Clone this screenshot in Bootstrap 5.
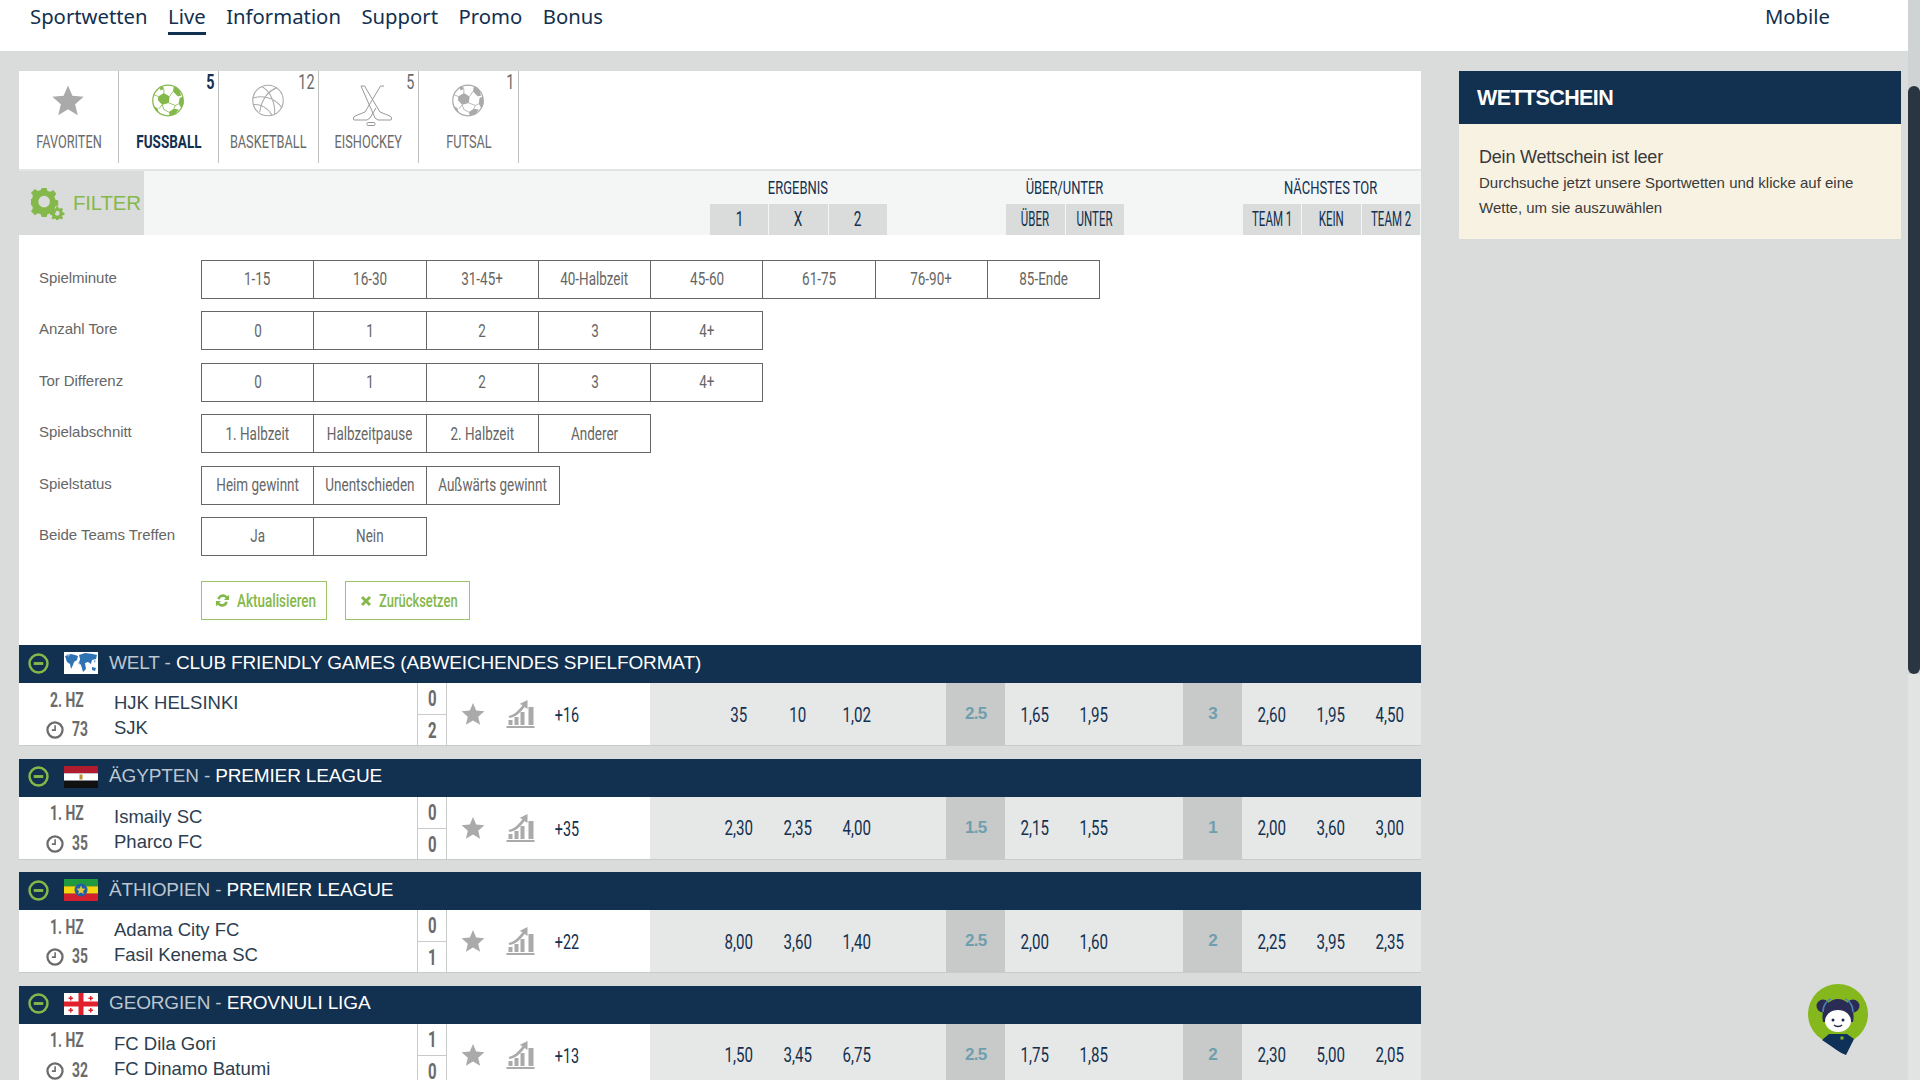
<!DOCTYPE html>
<html lang="de">
<head>
  <meta charset="UTF-8">
  <title>Live Sportwetten</title>
  <link href="https://cdn.jsdelivr.net/npm/bootstrap@5.3.0/dist/css/bootstrap.min.css" rel="stylesheet">
  <style>
    html, body { height: 100%; overflow: hidden; }
    body { background: #d9dcdb; font-family: "Liberation Sans", Arial, sans-serif; color: #12304f; }
    .shell { height: 1080px; overflow: hidden; position: relative; }
    .page-col { width: 1908px; }
    .fake-scroll { width: 12px; background: linear-gradient(#cfd3d3 0, #cfd3d3 674px, #e2e4e4 674px); position: relative; }
    .fake-scroll span { position: absolute; left: 0; right: 0; top: 86px; height: 588px; background: #2a3542; border-radius: 6px; }

    /* no condensed font installed, so squeeze Roboto */
    .cn { display: inline-block; flex-shrink: 0; white-space: nowrap; font-family: Roboto, sans-serif; transform: scaleX(.75); }
    .cn-l { transform-origin: left center; }
    .cn-r { transform-origin: right center; }

    .topbar { height: 51px; background: #fff; padding-left: 30px; }
    .topnav-list { gap: 20.500px; }
    .topbar a { font-family: "Noto Sans", sans-serif; font-size: 20.300px; line-height: 24px; color: #12304f; text-decoration: none; display: block; padding: 4px 0 4px; }
    .topbar a.is-on { border-bottom: 3px solid #12304f; }
    .topbar .mobile-link { margin-right: 78px; }

    .main-col { width: 1402px; margin-left: 19px; }
    .side-col { width: 442px; margin-left: 38px; }
    .content-wrap { padding-top: 20px; }

    .sport-tabs { background: #fff; height: 100px; border-bottom: 2px solid #e3e4e4; padding-bottom: 6px; }
    .sport-tab { width: 100px; height: 92px; border-right: 1px solid #bfc0c0; position: relative; color: #6b6b6b; }
    .sport-tab > svg { display: block; margin: 13px 0 0 28.500px; height: 33px; width: 40px; }
    .sport-tab > svg.hockey { height: 41px; width: 41px; margin: 14px 0 0 33px; }
    .tab-name { position: absolute; left: 0; right: 0; top: 60px; height: 22px; font-size: 19px; }
    .tab-name .cn { transform: scaleX(.67); }
    .tab-count { position: absolute; right: 4px; top: 0; font-size: 20px; line-height: 22px; }
    .tab-count .cn { transform: scaleX(.72); }
    .sport-tab.is-on { color: #12304f; }
    .sport-tab.is-on .cn { font-weight: 700; }
    .sport-tab.is-on .tab-name .cn { transform: scaleX(.71); }

    .filter-head { background: #f4f5f5; height: 64px; }
    .filter-tag { width: 125px; background: #d9dcdb; color: #85b84a; font-size: 20.500px; letter-spacing: -.2px; gap: 7px; padding-left: 12px; flex-shrink: 0; }
    .odds-grid { display: grid; grid-template-columns: repeat(13, 59.23px); }
    .market-head { margin-left: 506px; grid-template-rows: 33px 31px; }
    .market-title { font-size: 18.500px; padding-top: 3px; }
    .market-title .cn { transform: scaleX(.7); }
    .market-cell { background: #d9dcdb; font-size: 19.500px; margin-left: 1px; padding-top: 1px; }
    .market-cell .cn { transform: scaleX(.7); }
    .market-cell .cn.tight { transform: scaleX(.59); }
    .mk-a { grid-column: 2 / span 3; }
    .mk-b { grid-column: 7 / span 2; }
    .mk-c { grid-column: 11 / span 3; }
    .col-2nd { grid-column-start: 2; }
    .col-6th { grid-column-start: 6; }
    .col-7th { grid-column-start: 7; }
    .col-10th { grid-column-start: 10; }
    .col-11th { grid-column-start: 11; }

    .filter-body { background: #fff; height: 410px; padding: 25px 0 0 20px; }
    .filter-row { height: 51.400px; }
    .filter-label { width: 162px; font-size: 15px; color: #666; letter-spacing: -.05px; line-height: 36px; }
    .filter-btn { width: 113.300px; height: 39px; border: 1px solid #666; margin-right: -1px; font-size: 17.500px; color: #666; background: #fff; }
    .filter-btn .cn, .action-btn .cn { transform: scaleX(.77); }
    .filter-btn.wide { width: 134.500px; }
    .filter-actions { padding: 13px 0 0 162px; gap: 18px; }
    .action-btn { height: 39px; border: 1px solid #9dc368; color: #85b84a; font-size: 17.500px; font-weight: 500; padding: 0 0 0 13px; background: #fff; border-radius: 0; overflow: visible; }
    .action-a { width: 126px; gap: 7px; }
    .action-b { width: 125px; gap: 7px; padding-left: 14px; }
    .action-b .cn { transform: scaleX(.74); }

    .league-head { height: 38px; background: #12304f; color: #fff; font-size: 19px; letter-spacing: -.15px; padding-bottom: 2px; }
    .league-head .toggle { margin: 0 15px 0 9px; }
    .league-head .flag { width: 34px; height: 22px; margin-right: 11px; display: block; }
    .league-head .land { color: #bcc6d0; white-space: pre; }

    .match-row { height: 63px; margin-bottom: 12.500px; background: #fff; border-bottom: 1px solid #c9caca; }
    .match-time { width: 78px; padding: 3px 0 0 27px; color: #6b6b6b; font-size: 21px; font-weight: 700; flex-shrink: 0; }
    .match-time .cn { transform: scaleX(.66); }
    .time-top { height: 29px; padding-left: 4px; }
    .time-bot { height: 30px; gap: 4px; font-size: 21px; }
    .match-teams { width: 320px; padding-left: 17px; font-size: 18.500px; line-height: 25px; color: #2c3e50; padding-top: 7px; flex-shrink: 0; }
    .match-score { width: 30px; border-left: 1px solid #c9caca; border-right: 1px solid #c9caca; color: #6b6b6b; font-size: 22px; font-weight: 700; flex-shrink: 0; }
    .match-score > div { height: 31px; }
    .match-score > div:first-child { border-bottom: 1px solid #c9caca; height: 32px; }
    .match-score .cn { transform: scaleX(.68); }
    .match-extra { width: 203px; padding-left: 14px; flex-shrink: 0; }
    .more-count { width: 40px; margin-left: 11px; font-size: 20px; color: #12304f; padding-top: 2px; }
    .more-count .cn { transform: scaleX(.72); }
    .chart-ico { margin-left: 20px; }
    .odds { background: #e6e7e7; font-size: 21px; color: #12304f; height: 62px; }
    .odd { padding-top: 3px; }
    .odd .cn { transform: scaleX(.72); }
    .odd-line { background: #c8c9c9; color: #6f9fae; font-weight: 700; font-size: 17px; letter-spacing: -.8px; }

    .slip-head { height: 53px; background: #12304f; color: #fff; font-size: 21.500px; font-weight: 700; letter-spacing: -.6px; padding: 1px 0 0 18px; }
    .slip-body { height: 115px; background: #f8f2e3; padding: 21px 18px 0 20px; color: #3a3a3a; }
    .slip-title { font-size: 18px; line-height: 24px; letter-spacing: -.2px; }
    .slip-text { font-size: 15px; line-height: 25px; margin-top: 1px; }

    .chat-bot { position: absolute; left: 1808px; top: 984px; width: 60px; height: 72px; }
  </style>
</head>
<body>

<svg width="0" height="0" class="position-absolute">
  <symbol id="i-star" viewBox="0 0 24 24"><path d="M12 1l3.200 7.600 8.200.7-6.200 5.400 1.900 8L12 18.400 4.900 22.700l1.900-8L.6 9.300l8.200-.7z"/></symbol>
  <symbol id="i-chart" viewBox="0 0 30 30"><path d="M1 27h28v2H1zM3 21h4v5H3zM9 18h4v8H9zM15 13h4v13h-4zM23 8h5v18h-5z"/><path d="M3 17c5-1 10-5 14-11l-3-1 8-4 0 9-3-2c-4 6-9 10-15 11z"/></symbol>
  <symbol id="i-clock" viewBox="0 0 16 16"><circle cx="8" cy="8" r="6.700" fill="none" stroke="currentColor" stroke-width="2"/><path d="M8.800 3.800v5H5.200V7.400h2.200V3.800z" fill="currentColor"/></symbol>
  <symbol id="i-minus" viewBox="0 0 22 22"><circle cx="11" cy="11" r="9.400" fill="none" stroke="#85b84a" stroke-width="2.600"/><rect x="6" y="9.500" width="10" height="3" fill="#85b84a"/></symbol>
  <symbol id="i-ball" viewBox="0 0 40 40">
    <circle cx="20" cy="20" r="18.500" fill="none" stroke="currentColor" stroke-width="1.500"/>
    <path d="M8 15l7-4 7 4-1 8-8 2-5-5zM27 3l6 3 3 8-4 1-6-6zM38 15l1 9-3 5-3-5 1-7zM21 34l6-4 6 1-5 6-6 1zM3 27l4 2 2 6-4-3zM10 4l4-1 1 3-4 2z" fill="currentColor"/>
    <path d="M22 15l4-6M21 23l8 3 4-2M15 11V6M13 25l2 6 6 3M8 15l-5-2M9 30l4-5M29 26l-2 4" stroke="currentColor" fill="none"/>
  </symbol>
</svg>

<div class="shell d-flex">
  <div class="page-col flex-shrink-0">

    <nav class="topbar d-flex justify-content-between">
      <div class="d-flex align-items-start topnav-list">
        <a href="#">Sportwetten</a>
        <a href="#" class="is-on">Live</a>
        <a href="#">Information</a>
        <a href="#">Support</a>
        <a href="#">Promo</a>
        <a href="#">Bonus</a>
      </div>
      <div><a href="#" class="mobile-link">Mobile</a></div>
    </nav>

    <div class="d-flex content-wrap">
      <div class="main-col flex-shrink-0">

        <div class="sport-tabs d-flex">
          <div class="sport-tab">
            <svg fill="#aaa"><use href="#i-star"/></svg>
            <div class="tab-name d-flex justify-content-center align-items-center"><span class="cn">FAVORITEN</span></div>
          </div>
          <div class="sport-tab is-on">
            <svg style="color:#85b84a"><use href="#i-ball"/></svg>
            <div class="tab-name d-flex justify-content-center align-items-center"><span class="cn">FUSSBALL</span></div>
            <div class="tab-count"><span class="cn cn-r">5</span></div>
          </div>
          <div class="sport-tab">
            <svg viewBox="0 0 40 40" fill="none" stroke="#aaa" stroke-width="1.300">
              <circle cx="20" cy="20" r="18.500"/>
              <path d="M12 3c9 4 17 17 16 34M2 17c12-4 27 0 35 12M2 25c9-1 18 4 23 13M30 5c-9 3-18 13-20 29"/>
            </svg>
            <div class="tab-name d-flex justify-content-center align-items-center"><span class="cn">BASKETBALL</span></div>
            <div class="tab-count"><span class="cn cn-r">12</span></div>
          </div>
          <div class="sport-tab">
            <svg class="hockey" viewBox="0 0 41 41" fill="none" stroke="#999" stroke-width="1">
              <path d="M9 1h3.500L28 27l10 4c2 1 2 3 1 4H26l-3-2z"/>
              <path d="M32 1h-3.500L13 27 3 31c-2 1-2 3-1 4h13l3-2 6-10"/>
              <rect x="15" y="37.500" width="8" height="3" rx="1"/>
            </svg>
            <div class="tab-name d-flex justify-content-center align-items-center"><span class="cn">EISHOCKEY</span></div>
            <div class="tab-count"><span class="cn cn-r">5</span></div>
          </div>
          <div class="sport-tab">
            <svg style="color:#aaa"><use href="#i-ball"/></svg>
            <div class="tab-name d-flex justify-content-center align-items-center"><span class="cn">FUTSAL</span></div>
            <div class="tab-count"><span class="cn cn-r">1</span></div>
          </div>
        </div>

        <div class="filter-head d-flex">
          <div class="filter-tag d-flex align-items-center">
            <svg width="35" height="33" viewBox="0 0 36 34" fill="#85b84a">
              <path d="M11 1h5l1 3 3 1 3-2 3 4-2 3 1 3 3 1v5l-3 1-1 3 2 3-4 3-2-2-3 1-1 3h-5l-1-3-3-1-3 2-4-4 2-3-1-3-3-1v-5l3-1 1-3-2-3 4-4 3 2 3-1zM13.500 9a6 6 0 100 12 6 6 0 000-12z"/>
              <path d="M26 20h2l.5 2 1.500.5 1.500-1 1.500 1.500-1 1.500.5 1.500 2 .5v2l-2 .5-.5 1.500 1 1.500-1.500 1.500-1.500-1-1.500.5-.5 2h-2l-.5-2-1.500-.5-1.500 1-1.500-1.500 1-1.500-.5-1.500-2-.5v-2l2-.5.5-1.500-1-1.500 1.500-1.500 1.500 1 1.500-.5zM27 24.500a2.500 2.500 0 100 5 2.500 2.500 0 000-5z"/>
            </svg>
            FILTER
          </div>
          <div class="odds-grid market-head">
            <div class="market-title mk-a d-flex justify-content-center align-items-center"><span class="cn">ERGEBNIS</span></div>
            <div class="market-title mk-b d-flex justify-content-center align-items-center"><span class="cn">ÜBER/UNTER</span></div>
            <div class="market-title mk-c d-flex justify-content-center align-items-center"><span class="cn">NÄCHSTES TOR</span></div>
            <div class="market-cell col-2nd d-flex justify-content-center align-items-center"><span class="cn">1</span></div>
            <div class="market-cell d-flex justify-content-center align-items-center"><span class="cn">X</span></div>
            <div class="market-cell d-flex justify-content-center align-items-center"><span class="cn">2</span></div>
            <div class="market-cell col-7th d-flex justify-content-center align-items-center"><span class="cn tight">ÜBER</span></div>
            <div class="market-cell d-flex justify-content-center align-items-center"><span class="cn tight">UNTER</span></div>
            <div class="market-cell col-11th d-flex justify-content-center align-items-center"><span class="cn tight">TEAM 1</span></div>
            <div class="market-cell d-flex justify-content-center align-items-center"><span class="cn tight">KEIN</span></div>
            <div class="market-cell d-flex justify-content-center align-items-center"><span class="cn tight">TEAM 2</span></div>
          </div>
        </div>

        <div class="filter-body">
          <div class="filter-row d-flex">
            <div class="filter-label">Spielminute</div>
            <div class="filter-btn d-flex justify-content-center align-items-center"><span class="cn">1-15</span></div>
            <div class="filter-btn d-flex justify-content-center align-items-center"><span class="cn">16-30</span></div>
            <div class="filter-btn d-flex justify-content-center align-items-center"><span class="cn">31-45+</span></div>
            <div class="filter-btn d-flex justify-content-center align-items-center"><span class="cn">40-Halbzeit</span></div>
            <div class="filter-btn d-flex justify-content-center align-items-center"><span class="cn">45-60</span></div>
            <div class="filter-btn d-flex justify-content-center align-items-center"><span class="cn">61-75</span></div>
            <div class="filter-btn d-flex justify-content-center align-items-center"><span class="cn">76-90+</span></div>
            <div class="filter-btn d-flex justify-content-center align-items-center"><span class="cn">85-Ende</span></div>
          </div>
          <div class="filter-row d-flex">
            <div class="filter-label">Anzahl Tore</div>
            <div class="filter-btn d-flex justify-content-center align-items-center"><span class="cn">0</span></div>
            <div class="filter-btn d-flex justify-content-center align-items-center"><span class="cn">1</span></div>
            <div class="filter-btn d-flex justify-content-center align-items-center"><span class="cn">2</span></div>
            <div class="filter-btn d-flex justify-content-center align-items-center"><span class="cn">3</span></div>
            <div class="filter-btn d-flex justify-content-center align-items-center"><span class="cn">4+</span></div>
          </div>
          <div class="filter-row d-flex">
            <div class="filter-label">Tor Differenz</div>
            <div class="filter-btn d-flex justify-content-center align-items-center"><span class="cn">0</span></div>
            <div class="filter-btn d-flex justify-content-center align-items-center"><span class="cn">1</span></div>
            <div class="filter-btn d-flex justify-content-center align-items-center"><span class="cn">2</span></div>
            <div class="filter-btn d-flex justify-content-center align-items-center"><span class="cn">3</span></div>
            <div class="filter-btn d-flex justify-content-center align-items-center"><span class="cn">4+</span></div>
          </div>
          <div class="filter-row d-flex">
            <div class="filter-label">Spielabschnitt</div>
            <div class="filter-btn d-flex justify-content-center align-items-center"><span class="cn">1. Halbzeit</span></div>
            <div class="filter-btn d-flex justify-content-center align-items-center"><span class="cn">Halbzeitpause</span></div>
            <div class="filter-btn d-flex justify-content-center align-items-center"><span class="cn">2. Halbzeit</span></div>
            <div class="filter-btn d-flex justify-content-center align-items-center"><span class="cn">Anderer</span></div>
          </div>
          <div class="filter-row d-flex">
            <div class="filter-label">Spielstatus</div>
            <div class="filter-btn d-flex justify-content-center align-items-center"><span class="cn">Heim gewinnt</span></div>
            <div class="filter-btn d-flex justify-content-center align-items-center"><span class="cn">Unentschieden</span></div>
            <div class="filter-btn wide d-flex justify-content-center align-items-center"><span class="cn">Außwärts gewinnt</span></div>
          </div>
          <div class="filter-row d-flex">
            <div class="filter-label">Beide Teams Treffen</div>
            <div class="filter-btn d-flex justify-content-center align-items-center"><span class="cn">Ja</span></div>
            <div class="filter-btn d-flex justify-content-center align-items-center"><span class="cn">Nein</span></div>
          </div>
          <div class="filter-actions d-flex">
            <button type="button" class="btn action-btn action-a d-flex align-items-center">
              <svg width="15" height="15" viewBox="0 0 16 16" fill="#85b84a" class="flex-shrink-0"><path d="M2.500 6.500A6 6 0 0113 3.500l2-1.500v5.500H9.500l2-1.800A3.700 3.700 0 005 7zM13.500 9.500A6 6 0 013 12.500L1 14V8.500h5.500l-2 1.800A3.700 3.700 0 0011 9z"/></svg>
              <span class="cn cn-l">Aktualisieren</span>
            </button>
            <button type="button" class="btn action-btn action-b d-flex align-items-center">
              <svg width="12" height="12" viewBox="0 0 12 12" fill="#85b84a" class="flex-shrink-0"><path d="M3 1l3 3 3-3 2 2-3 3 3 3-2 2-3-3-3 3-2-2 3-3-3-3z"/></svg>
              <span class="cn cn-l">Zurücksetzen</span>
            </button>
          </div>
        </div>

        <div class="league-head d-flex align-items-center">
          <svg class="toggle" width="21" height="21"><use href="#i-minus"/></svg>
          <svg class="flag" viewBox="0 0 34 22"><rect width="34" height="22" fill="#fff"/><path d="M1 4l6-2 4 1 3 1-1 4-3 2-1 3-2 4-1-5-3-2zM15 3l6-2 8 1 4 1-1 4-4 1-1 4-3-2-3 1 1 6-3 3-2-7-2-2 1-4zM28 15l4 1-1 3-3-1z" fill="#2e74b5"/><path d="M3 2l3 1-2 2zM14 10l2 1-1 2zM30 8l2 1-2 2z" fill="#7fb0dc"/></svg>
          <span class="land">WELT - </span><span>CLUB FRIENDLY GAMES (ABWEICHENDES SPIELFORMAT)</span>
        </div>
        <div class="match-row d-flex">
          <div class="match-time">
            <div class="time-top d-flex align-items-center"><span class="cn cn-l">2. HZ</span></div>
            <div class="time-bot d-flex align-items-center"><svg width="18" height="18" class="flex-shrink-0"><use href="#i-clock"/></svg><span class="cn">73</span></div>
          </div>
          <div class="match-teams">HJK HELSINKI<br>SJK</div>
          <div class="match-score">
            <div class="d-flex justify-content-center align-items-center"><span class="cn">0</span></div>
            <div class="d-flex justify-content-center align-items-center"><span class="cn">2</span></div>
          </div>
          <div class="match-extra d-flex align-items-center">
            <svg width="24" height="24" fill="#aaa"><use href="#i-star"/></svg>
            <svg class="chart-ico" width="31" height="30" fill="#aaa"><use href="#i-chart"/></svg>
            <div class="more-count d-flex justify-content-center"><span class="cn">+16</span></div>
          </div>
          <div class="odds odds-grid flex-grow-1">
            <div class="odd col-2nd d-flex justify-content-center align-items-center"><span class="cn">35</span></div>
            <div class="odd d-flex justify-content-center align-items-center"><span class="cn">10</span></div>
            <div class="odd d-flex justify-content-center align-items-center"><span class="cn">1,02</span></div>
            <div class="odd-line col-6th d-flex justify-content-center align-items-center">2.5</div>
            <div class="odd d-flex justify-content-center align-items-center"><span class="cn">1,65</span></div>
            <div class="odd d-flex justify-content-center align-items-center"><span class="cn">1,95</span></div>
            <div class="odd-line col-10th d-flex justify-content-center align-items-center">3</div>
            <div class="odd d-flex justify-content-center align-items-center"><span class="cn">2,60</span></div>
            <div class="odd d-flex justify-content-center align-items-center"><span class="cn">1,95</span></div>
            <div class="odd d-flex justify-content-center align-items-center"><span class="cn">4,50</span></div>
          </div>
        </div>

        <div class="league-head d-flex align-items-center">
          <svg class="toggle" width="21" height="21"><use href="#i-minus"/></svg>
          <svg class="flag" viewBox="0 0 34 22"><rect width="34" height="7.300" fill="#b01c2e"/><rect y="7.300" width="34" height="7.400" fill="#fff"/><rect y="14.700" width="34" height="7.300" fill="#111"/><rect x="15.500" y="8.500" width="3" height="5" fill="#b8912f"/></svg>
          <span class="land">ÄGYPTEN - </span><span>PREMIER LEAGUE</span>
        </div>
        <div class="match-row d-flex">
          <div class="match-time">
            <div class="time-top d-flex align-items-center"><span class="cn cn-l">1. HZ</span></div>
            <div class="time-bot d-flex align-items-center"><svg width="18" height="18" class="flex-shrink-0"><use href="#i-clock"/></svg><span class="cn">35</span></div>
          </div>
          <div class="match-teams">Ismaily SC<br>Pharco FC</div>
          <div class="match-score">
            <div class="d-flex justify-content-center align-items-center"><span class="cn">0</span></div>
            <div class="d-flex justify-content-center align-items-center"><span class="cn">0</span></div>
          </div>
          <div class="match-extra d-flex align-items-center">
            <svg width="24" height="24" fill="#aaa"><use href="#i-star"/></svg>
            <svg class="chart-ico" width="31" height="30" fill="#aaa"><use href="#i-chart"/></svg>
            <div class="more-count d-flex justify-content-center"><span class="cn">+35</span></div>
          </div>
          <div class="odds odds-grid flex-grow-1">
            <div class="odd col-2nd d-flex justify-content-center align-items-center"><span class="cn">2,30</span></div>
            <div class="odd d-flex justify-content-center align-items-center"><span class="cn">2,35</span></div>
            <div class="odd d-flex justify-content-center align-items-center"><span class="cn">4,00</span></div>
            <div class="odd-line col-6th d-flex justify-content-center align-items-center">1.5</div>
            <div class="odd d-flex justify-content-center align-items-center"><span class="cn">2,15</span></div>
            <div class="odd d-flex justify-content-center align-items-center"><span class="cn">1,55</span></div>
            <div class="odd-line col-10th d-flex justify-content-center align-items-center">1</div>
            <div class="odd d-flex justify-content-center align-items-center"><span class="cn">2,00</span></div>
            <div class="odd d-flex justify-content-center align-items-center"><span class="cn">3,60</span></div>
            <div class="odd d-flex justify-content-center align-items-center"><span class="cn">3,00</span></div>
          </div>
        </div>

        <div class="league-head d-flex align-items-center">
          <svg class="toggle" width="21" height="21"><use href="#i-minus"/></svg>
          <svg class="flag" viewBox="0 0 34 22"><rect width="34" height="7.300" fill="#1f9a3c"/><rect y="7.300" width="34" height="7.400" fill="#f6d60f"/><rect y="14.700" width="34" height="7.300" fill="#d3202e"/><circle cx="17" cy="11" r="6.500" fill="#1f5fa8"/><path d="M17 6.500l1.300 3 3.200.3-2.400 2.100.7 3.100-2.800-1.600-2.800 1.600.7-3.100-2.400-2.100 3.200-.3z" fill="#e0c93a"/></svg>
          <span class="land">ÄTHIOPIEN - </span><span>PREMIER LEAGUE</span>
        </div>
        <div class="match-row d-flex">
          <div class="match-time">
            <div class="time-top d-flex align-items-center"><span class="cn cn-l">1. HZ</span></div>
            <div class="time-bot d-flex align-items-center"><svg width="18" height="18" class="flex-shrink-0"><use href="#i-clock"/></svg><span class="cn">35</span></div>
          </div>
          <div class="match-teams">Adama City FC<br>Fasil Kenema SC</div>
          <div class="match-score">
            <div class="d-flex justify-content-center align-items-center"><span class="cn">0</span></div>
            <div class="d-flex justify-content-center align-items-center"><span class="cn">1</span></div>
          </div>
          <div class="match-extra d-flex align-items-center">
            <svg width="24" height="24" fill="#aaa"><use href="#i-star"/></svg>
            <svg class="chart-ico" width="31" height="30" fill="#aaa"><use href="#i-chart"/></svg>
            <div class="more-count d-flex justify-content-center"><span class="cn">+22</span></div>
          </div>
          <div class="odds odds-grid flex-grow-1">
            <div class="odd col-2nd d-flex justify-content-center align-items-center"><span class="cn">8,00</span></div>
            <div class="odd d-flex justify-content-center align-items-center"><span class="cn">3,60</span></div>
            <div class="odd d-flex justify-content-center align-items-center"><span class="cn">1,40</span></div>
            <div class="odd-line col-6th d-flex justify-content-center align-items-center">2.5</div>
            <div class="odd d-flex justify-content-center align-items-center"><span class="cn">2,00</span></div>
            <div class="odd d-flex justify-content-center align-items-center"><span class="cn">1,60</span></div>
            <div class="odd-line col-10th d-flex justify-content-center align-items-center">2</div>
            <div class="odd d-flex justify-content-center align-items-center"><span class="cn">2,25</span></div>
            <div class="odd d-flex justify-content-center align-items-center"><span class="cn">3,95</span></div>
            <div class="odd d-flex justify-content-center align-items-center"><span class="cn">2,35</span></div>
          </div>
        </div>

        <div class="league-head d-flex align-items-center">
          <svg class="toggle" width="21" height="21"><use href="#i-minus"/></svg>
          <svg class="flag" viewBox="0 0 34 22"><rect width="34" height="22" fill="#fff"/><path d="M14.500 0h5v22h-5zM0 8.500h34v5H0z" fill="#e0202c"/><path d="M6 3h1.500v1.500H9V6H7.500v1.500H6V6H4.500V4.500H6zM26 3h1.500v1.500H29V6h-1.500v1.500H26V6h-1.500V4.500H26zM6 15h1.500v1.500H9V18H7.500v1.500H6V18H4.500v-1.500H6zM26 15h1.500v1.500H29V18h-1.500v1.500H26V18h-1.500v-1.500H26z" fill="#e0202c"/></svg>
          <span class="land">GEORGIEN - </span><span>EROVNULI LIGA</span>
        </div>
        <div class="match-row d-flex">
          <div class="match-time">
            <div class="time-top d-flex align-items-center"><span class="cn cn-l">1. HZ</span></div>
            <div class="time-bot d-flex align-items-center"><svg width="18" height="18" class="flex-shrink-0"><use href="#i-clock"/></svg><span class="cn">32</span></div>
          </div>
          <div class="match-teams">FC Dila Gori<br>FC Dinamo Batumi</div>
          <div class="match-score">
            <div class="d-flex justify-content-center align-items-center"><span class="cn">1</span></div>
            <div class="d-flex justify-content-center align-items-center"><span class="cn">0</span></div>
          </div>
          <div class="match-extra d-flex align-items-center">
            <svg width="24" height="24" fill="#aaa"><use href="#i-star"/></svg>
            <svg class="chart-ico" width="31" height="30" fill="#aaa"><use href="#i-chart"/></svg>
            <div class="more-count d-flex justify-content-center"><span class="cn">+13</span></div>
          </div>
          <div class="odds odds-grid flex-grow-1">
            <div class="odd col-2nd d-flex justify-content-center align-items-center"><span class="cn">1,50</span></div>
            <div class="odd d-flex justify-content-center align-items-center"><span class="cn">3,45</span></div>
            <div class="odd d-flex justify-content-center align-items-center"><span class="cn">6,75</span></div>
            <div class="odd-line col-6th d-flex justify-content-center align-items-center">2.5</div>
            <div class="odd d-flex justify-content-center align-items-center"><span class="cn">1,75</span></div>
            <div class="odd d-flex justify-content-center align-items-center"><span class="cn">1,85</span></div>
            <div class="odd-line col-10th d-flex justify-content-center align-items-center">2</div>
            <div class="odd d-flex justify-content-center align-items-center"><span class="cn">2,30</span></div>
            <div class="odd d-flex justify-content-center align-items-center"><span class="cn">5,00</span></div>
            <div class="odd d-flex justify-content-center align-items-center"><span class="cn">2,05</span></div>
          </div>
        </div>

      </div>
      <aside class="side-col flex-shrink-0">
        <div class="slip-head d-flex align-items-center">WETTSCHEIN</div>
        <div class="slip-body">
          <div class="slip-title">Dein Wettschein ist leer</div>
          <div class="slip-text">Durchsuche jetzt unsere Sportwetten und klicke auf eine Wette, um sie auszuwählen</div>
        </div>
      </aside>
    </div>
  </div>
  <div class="fake-scroll flex-shrink-0"><span></span></div>

  <svg class="chat-bot" viewBox="0 0 60 72">
    <circle cx="30" cy="30" r="30" fill="#85b81c"/>
    <circle cx="15" cy="22" r="6.500" fill="#2a2c55"/>
    <circle cx="45" cy="22" r="6.500" fill="#2a2c55"/>
    <path d="M15 38c-3-14 6-23 15-23s18 9 15 23z" fill="#2a2c55"/>
    <path d="M15 28c0-8 5-12 8-13M45 28c0-8-5-12-8-13" fill="none" stroke="#4a86b8" stroke-width="1.500"/>
    <ellipse cx="30" cy="37" rx="13" ry="11" fill="#fff"/>
    <circle cx="25" cy="36" r="1.500" fill="#1d2a4a"/>
    <circle cx="35" cy="36" r="1.500" fill="#1d2a4a"/>
    <path d="M26 41c2 2 6 2 8 0" fill="none" stroke="#1d2a4a" stroke-width="1.300"/>
    <path d="M14 56l7-6h18l7 5-5 10-3 6c-6-2-15-9-24-15z" fill="#0f3057"/>
    <rect x="32.500" y="52.500" width="3" height="3" fill="#85b81c"/>
  </svg>
</div>

</body>
</html>
